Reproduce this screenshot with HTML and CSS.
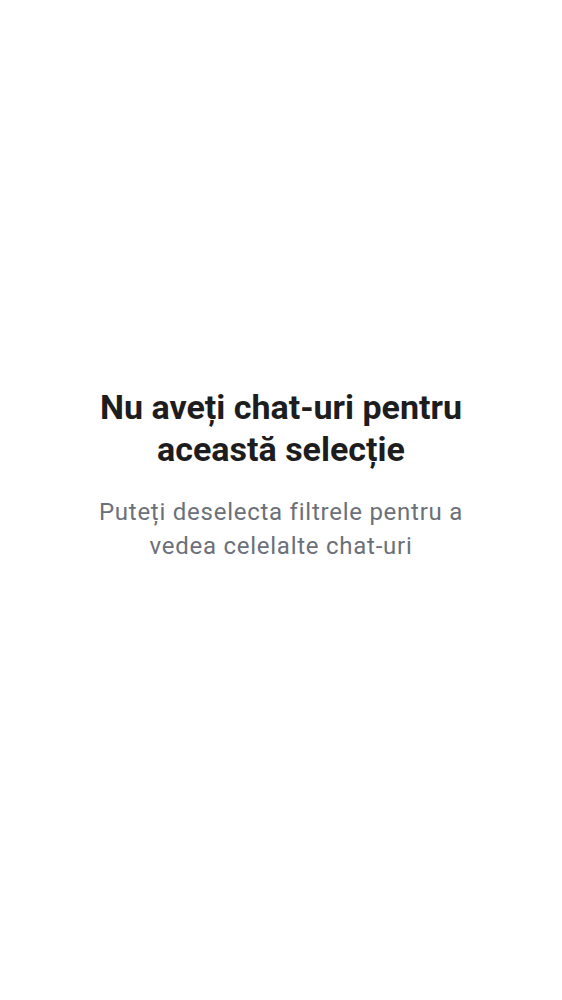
FILE: index.html
```html
<!DOCTYPE html>
<html lang="ro">
<head>
<meta charset="utf-8">
<link rel="stylesheet" href="styles.css">
</head>
<body>
<main class="empty">
  <h1 class="empty-title">Nu aveți chat-uri pentru această selecție</h1>
  <p class="empty-text">Puteți deselecta filtrele pentru a vedea celelalte chat-uri</p>
</main>
</body>
</html>
```
FILE: styles.css
```css
html, body {
  margin: 0;
  padding: 0;
  background: #ffffff;
}
body {
  font-family: Roboto, "Noto Sans", sans-serif;
  width: 562px;
  height: 1000px;
}
.empty {
  display: flex;
  flex-direction: column;
  align-items: center;
  padding: 386px 40px 0;
  text-align: center;
}
.empty-title {
  margin: 0;
  max-width: 400px;
  font-size: 34px;
  line-height: 42px;
  font-weight: 700;
  color: #1d1d20;
}
.empty-text {
  margin: 25px 0 0;
  max-width: 420px;
  font-size: 24px;
  line-height: 34px;
  font-weight: 400;
  letter-spacing: 0.75px;
  color: #6b7079;
}
```
